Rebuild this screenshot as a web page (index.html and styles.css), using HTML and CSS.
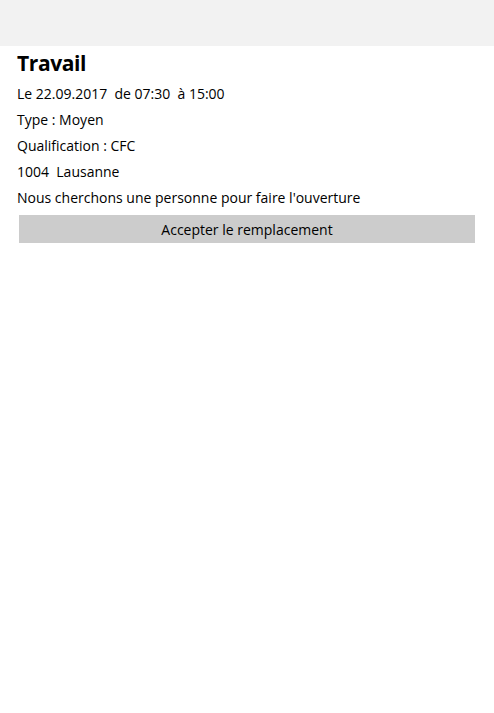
FILE: index.html
```html
<!DOCTYPE html>
<html lang="fr">
<head>
  <meta charset="UTF-8">
  <meta name="viewport" content="width=device-width, initial-scale=1.0">
  <title>Travail</title>
  <link rel="stylesheet" href="styles.css">
</head>
<body>
  <div class="top-bar"></div>

  <div class="details">
    <h1 class="title">Travail</h1>
    <p class="line">Le 22.09.2017&nbsp; de 07:30&nbsp; à 15:00</p>
    <p class="line">Type : Moyen</p>
    <p class="line">Qualification : CFC</p>
    <p class="line">1004&nbsp; Lausanne</p>
    <p class="line">Nous cherchons une personne pour faire l'ouverture</p>
    <button class="accept-btn">Accepter le remplacement</button>
  </div>
</body>
</html>
```

FILE: styles.css
```css
* {
  margin: 0;
  padding: 0;
  box-sizing: border-box;
}

body {
  background: white;
  font-family: "Open Sans", "Noto Sans", sans-serif;
  color: black;
}

.top-bar {
  height: 46px;
  background-color: #f2f2f2;
}

.details {
  display: flex;
  flex-direction: column;
  padding: 4px 19px 0 17px;
}

.title {
  font-size: 21px;
  font-weight: bold;
  letter-spacing: -0.4px;
  line-height: 26px;
  height: 31px;
}

.line {
  font-size: 14px;
  line-height: 26px;
}

.accept-btn {
  margin: 4px 0 0 2px;
  height: 28px;
  border: none;
  background-color: #cccccc;
  font-family: inherit;
  font-size: 14px;
  color: black;
}
```
